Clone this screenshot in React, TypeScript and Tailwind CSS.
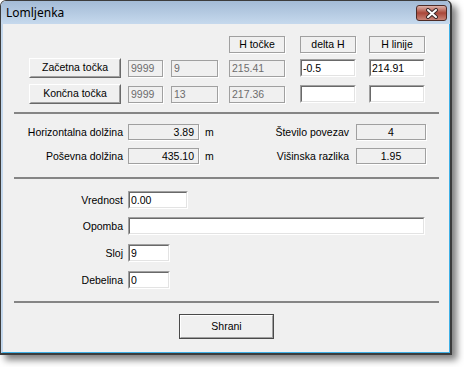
import React from 'react'

function Sep() {
  return <div className="ml-[11px] w-[425px] h-[2px] bg-[#858585]" />
}

function Edit({ className, value }: { className: string; value?: string }) {
  return (
    <div className={`border border-t-[#a0a0a0] border-l-[#a0a0a0] border-r-white border-b-white ${className}`}>
      <div className="h-full border border-t-[#696969] border-l-[#696969] border-r-[#e3e3e3] border-b-[#e3e3e3] bg-white flex items-center pl-[1px] leading-none text-black">
        {value}
      </div>
    </div>
  )
}

function Box({ className, children, align = 'center', gray }: { className: string; children?: React.ReactNode; align?: 'left' | 'center' | 'right'; gray?: boolean }) {
  const a = align === 'left' ? 'justify-start pl-[2px]' : align === 'right' ? 'justify-end pr-[4px]' : 'justify-center'
  return (
    <div
      className={`border border-[#a0a0a0] shadow-[1px_1px_0_#ffffff] flex items-center leading-none ${a} ${gray ? 'text-[#6d6d6d]' : 'text-black'} ${className}`}
    >
      {children}
    </div>
  )
}

function Btn({ className, children, def }: { className: string; children: React.ReactNode; def?: boolean }) {
  if (def) {
    return (
      <div className={`border border-[#4a4a4a] ${className}`}>
        <div className="h-full border border-t-white border-l-white border-r-[#a0a0a0] border-b-[#a0a0a0] flex items-center justify-center bg-[#f0f0f0]">
          {children}
        </div>
      </div>
    )
  }
  return (
    <div className={`border border-t-white border-l-white border-r-[#696969] border-b-[#696969] ${className}`}>
      <div className="h-full border border-t-[#f0f0f0] border-l-[#f0f0f0] border-r-[#a0a0a0] border-b-[#a0a0a0] flex items-center justify-center bg-[#f0f0f0]">
        {children}
      </div>
    </div>
  )
}

function Label({ children, className = 'w-[120px]' }: { children: React.ReactNode; className?: string }) {
  return <div className={`text-right leading-none ${className}`}>{children}</div>
}

export default function App() {
  return (
    <div className="w-[464px] h-[367px] bg-white overflow-hidden">
      <div className="w-[452px] h-[355px] flex flex-col rounded-t-[6px] border-t border-l border-r-2 border-b-2 border-[#3c3c3c] shadow-[5px_5px_7px_rgba(0,0,0,0.5)] overflow-hidden">
        {/* title bar */}
        <div className="h-[23px] shrink-0 flex items-start justify-between bg-gradient-to-b from-[#a3bbd6] to-[#c6d9ed]">
          <div className="pl-[5px] pt-[4px] text-[12px] text-black font-['Noto_Sans',sans-serif] leading-[15px]">Lomljenka</div>
          <div className="mt-[4px] mr-[3px] w-[31px] h-[16px] rounded-[3px] border border-[#4e2c27] bg-gradient-to-b from-[#dcb3ab] via-[#a9473a] to-[#c98478] flex items-center justify-center">
            <svg width="14" height="11" viewBox="0 0 14 11">
              <path d="M3 2 L11 9 M11 2 L3 9" stroke="#3a2a2a" strokeWidth="4" strokeLinecap="round" />
              <path d="M3 2 L11 9 M11 2 L3 9" stroke="#ffffff" strokeWidth="2" strokeLinecap="round" />
            </svg>
          </div>
        </div>

        {/* client */}
        <div className="flex-1 border-l-2 border-l-[#c3d7ec] border-r border-r-[#3fb0e6] border-b border-b-[#3fb0e6] bg-[#c6d9ed]">
          <div className="h-full bg-[#f0f0f0] text-[10.5px] text-black font-['Liberation_Sans',Arial,sans-serif] flex flex-col pt-[12px]">
            {/* headers */}
            <div className="flex pl-[226px]">
              <Box className="w-[56px] h-[17px]">H točke</Box>
              <Box className="ml-[15px] w-[56px] h-[17px]">delta H</Box>
              <Box className="ml-[13px] w-[56px] h-[17px]">H linije</Box>
            </div>

            {/* row 1 */}
            <div className="mt-[5px] h-[20px] flex items-center pl-[26px]">
              <Btn className="w-[92px] h-[20px]">Začetna točka</Btn>
              <Box className="ml-[7px] w-[35px] h-[17px]" align="left" gray>9999</Box>
              <Box className="ml-[8px] w-[47px] h-[17px]" align="left" gray>9</Box>
              <Box className="ml-[11px] w-[56px] h-[17px]" align="left" gray>215.41</Box>
              <Edit className="ml-[15px] w-[56px] h-[18px]" value="-0.5" />
              <Edit className="ml-[13px] w-[56px] h-[18px]" value="214.91" />
            </div>

            {/* row 2 */}
            <div className="mt-[6px] h-[20px] flex items-center pl-[26px]">
              <Btn className="w-[92px] h-[20px]">Končna točka</Btn>
              <Box className="ml-[7px] w-[35px] h-[17px]" align="left" gray>9999</Box>
              <Box className="ml-[8px] w-[47px] h-[17px]" align="left" gray>13</Box>
              <Box className="ml-[11px] w-[56px] h-[17px]" align="left" gray>217.36</Box>
              <Edit className="ml-[15px] w-[56px] h-[18px]" />
              <Edit className="ml-[13px] w-[56px] h-[18px]" />
            </div>

            <div className="mt-[8px]">
              <Sep />
            </div>

            {/* section 2 */}
            <div className="mt-[10px] h-[16px] flex items-center">
              <Label>Horizontalna dolžina</Label>
              <Box className="ml-[5px] w-[71px] h-[16px]" align="right">3.89</Box>
              <div className="ml-[6px] w-[15px] leading-none">m</div>
              <Label className="w-[129px]">Število povezav</Label>
              <Box className="ml-[7px] w-[70px] h-[16px]">4</Box>
            </div>
            <div className="mt-[8px] h-[16px] flex items-center">
              <Label>Poševna dolžina</Label>
              <Box className="ml-[5px] w-[71px] h-[16px]" align="right">435.10</Box>
              <div className="ml-[6px] w-[15px] leading-none">m</div>
              <Label className="w-[129px]">Višinska razlika</Label>
              <Box className="ml-[7px] w-[70px] h-[16px]">1.95</Box>
            </div>

            <div className="mt-[13px]">
              <Sep />
            </div>

            {/* section 3 */}
            <div className="mt-[12px] h-[18px] flex items-center">
              <Label>Vrednost</Label>
              <Edit className="ml-[5px] w-[60px] h-[18px]" value="0.00" />
            </div>
            <div className="mt-[8px] h-[18px] flex items-center">
              <Label>Opomba</Label>
              <Edit className="ml-[5px] w-[297px] h-[18px]" />
            </div>
            <div className="mt-[9px] h-[18px] flex items-center">
              <Label>Sloj</Label>
              <Edit className="ml-[5px] w-[42px] h-[18px]" value="9" />
            </div>
            <div className="mt-[9px] h-[18px] flex items-center">
              <Label>Debelina</Label>
              <Edit className="ml-[5px] w-[42px] h-[18px]" value="0" />
            </div>

            <div className="mt-[12px]">
              <Sep />
            </div>

            <div className="mt-[11px] pl-[176px]">
              <Btn className="w-[95px] h-[25px]" def>
                Shrani
              </Btn>
            </div>
          </div>
        </div>
      </div>
    </div>
  )
}
